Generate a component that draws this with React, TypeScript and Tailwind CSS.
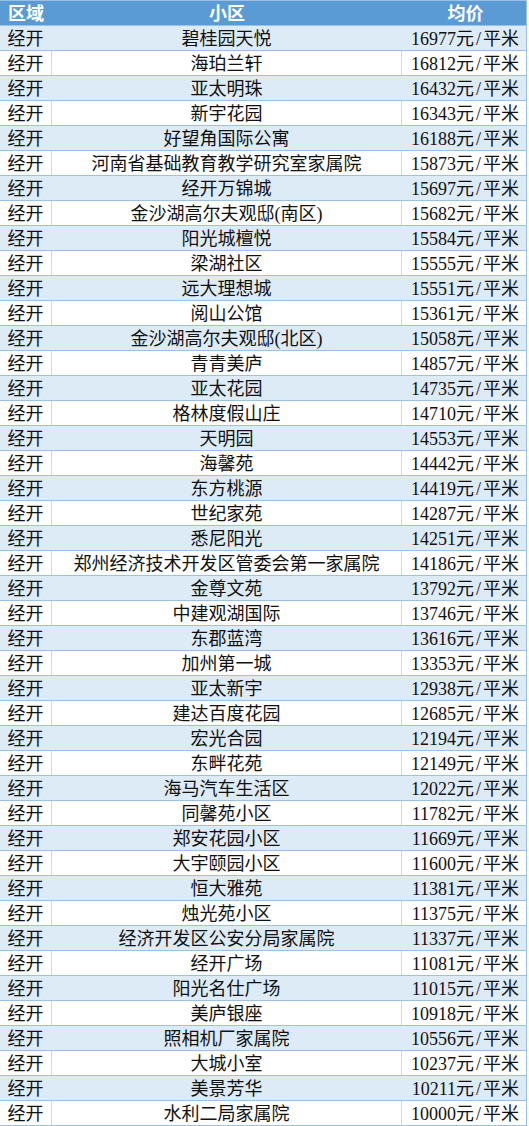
import React from 'react';

interface Row {
  name: string;
  price: number;
}

const rows: Row[] = [
  { name: '碧桂园天悦', price: 16977 },
  { name: '海珀兰轩', price: 16812 },
  { name: '亚太明珠', price: 16432 },
  { name: '新宇花园', price: 16343 },
  { name: '好望角国际公寓', price: 16188 },
  { name: '河南省基础教育教学研究室家属院', price: 15873 },
  { name: '经开万锦城', price: 15697 },
  { name: '金沙湖高尔夫观邸(南区)', price: 15682 },
  { name: '阳光城檀悦', price: 15584 },
  { name: '梁湖社区', price: 15555 },
  { name: '远大理想城', price: 15551 },
  { name: '阅山公馆', price: 15361 },
  { name: '金沙湖高尔夫观邸(北区)', price: 15058 },
  { name: '青青美庐', price: 14857 },
  { name: '亚太花园', price: 14735 },
  { name: '格林度假山庄', price: 14710 },
  { name: '天明园', price: 14553 },
  { name: '海馨苑', price: 14442 },
  { name: '东方桃源', price: 14419 },
  { name: '世纪家苑', price: 14287 },
  { name: '悉尼阳光', price: 14251 },
  { name: '郑州经济技术开发区管委会第一家属院', price: 14186 },
  { name: '金尊文苑', price: 13792 },
  { name: '中建观湖国际', price: 13746 },
  { name: '东郡蓝湾', price: 13616 },
  { name: '加州第一城', price: 13353 },
  { name: '亚太新宇', price: 12938 },
  { name: '建达百度花园', price: 12685 },
  { name: '宏光合园', price: 12194 },
  { name: '东畔花苑', price: 12149 },
  { name: '海马汽车生活区', price: 12022 },
  { name: '同馨苑小区', price: 11782 },
  { name: '郑安花园小区', price: 11669 },
  { name: '大宇颐园小区', price: 11600 },
  { name: '恒大雅苑', price: 11381 },
  { name: '烛光苑小区', price: 11375 },
  { name: '经济开发区公安分局家属院', price: 11337 },
  { name: '经开广场', price: 11081 },
  { name: '阳光名仕广场', price: 11015 },
  { name: '美庐银座', price: 10918 },
  { name: '照相机厂家属院', price: 10556 },
  { name: '大城小室', price: 10237 },
  { name: '美景芳华', price: 10211 },
  { name: '水利二局家属院', price: 10000 },
];

const font = "font-['Liberation_Serif','Noto_Sans_CJK_SC',serif]";

const App: React.FC = () => {
  return (
    <div className={`w-[527px] bg-white ${font} text-[18px] leading-none text-[#111]`}>
      <div className="border-t border-r border-[#9bc2e6]">
        {/* header */}
        <div className="flex h-[25px] bg-[#5b9bd5] border-b border-[#9bc2e6] font-bold text-white">
          <div className="w-[52px] flex items-center justify-center pt-[1px]">区域</div>
          <div className="w-[350px] flex items-center justify-center pt-[1px]">小区</div>
          <div className="flex-1 flex items-center justify-center pl-[3px] pt-[1px]">均价</div>
        </div>

        {rows.map((row, i) => {
          const shaded = i % 2 === 0;
          const line = shaded ? 'border-[#ddebf7]' : 'border-[#d0d7e5]';
          return (
            <div
              key={row.name}
              className={`flex h-[25px] border-b border-[#9bc2e6] ${shaded ? 'bg-[#ddebf7]' : 'bg-white'}`}
            >
              <div className={`w-[52px] flex items-center justify-center pt-[2px] border-r ${line}`}>经开</div>
              <div className={`w-[350px] flex items-center justify-center pt-[2px] border-r ${line} whitespace-nowrap`}>
                {row.name}
              </div>
              <div className="flex-1 flex items-center justify-end pr-[7px] pt-[2px] whitespace-nowrap">
                {row.price}元<span className="px-[2px]">/</span>平米
              </div>
            </div>
          );
        })}
      </div>
    </div>
  );
};

export default App;
